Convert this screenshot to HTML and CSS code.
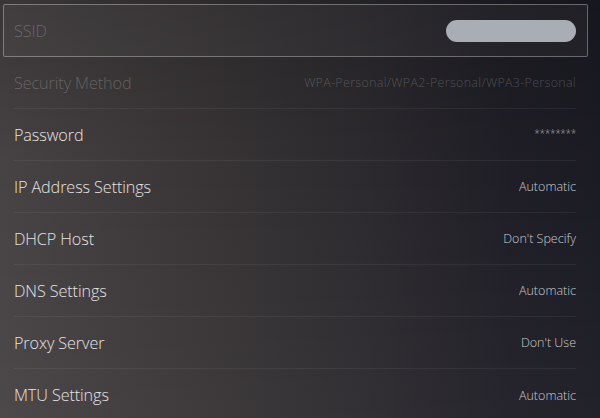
FILE: index.html
```html
<!DOCTYPE html>
<html lang="en">
<head>
<meta charset="utf-8">
<title>Wi-Fi Advanced Settings</title>
<link rel="stylesheet" href="styles.css">
</head>
<body>
<main class="screen">
  <ul class="settings">
    <li class="row row-focus disabled">
      <span class="label">SSID</span>
      <span class="pill"></span>
    </li>
    <li class="row disabled">
      <span class="label">Security Method</span>
      <span class="value wide">WPA-Personal/WPA2-Personal/WPA3-Personal</span>
    </li>
    <li class="row">
      <span class="label">Password</span>
      <span class="value secret">********</span>
    </li>
    <li class="row">
      <span class="label">IP Address Settings</span>
      <span class="value">Automatic</span>
    </li>
    <li class="row">
      <span class="label">DHCP Host</span>
      <span class="value">Don't Specify</span>
    </li>
    <li class="row">
      <span class="label">DNS Settings</span>
      <span class="value">Automatic</span>
    </li>
    <li class="row">
      <span class="label">Proxy Server</span>
      <span class="value">Don't Use</span>
    </li>
    <li class="row">
      <span class="label">MTU Settings</span>
      <span class="value">Automatic</span>
    </li>
  </ul>
</main>
</body>
</html>
```

FILE: styles.css
```css
* {
  box-sizing: border-box;
}

html,
body {
  margin: 0;
  height: 100%;
}

body {
  font-family: "Open Sans", "Noto Sans", sans-serif;
  font-weight: 300;
  color: #e4e4e6;
  overflow: hidden;
  background:
    linear-gradient(180deg, rgba(0, 0, 0, 0.18) 0%, rgba(0, 0, 0, 0) 40%, rgba(255, 255, 255, 0.03) 100%),
    linear-gradient(90deg, #474243 0%, #3a3637 30%, #2c2a2e 60%, #1f1e26 85%, #1b1b24 100%);
}

.screen {
  height: 100%;
  padding: 4px 24px 0 14px;
}

.settings {
  list-style: none;
  margin: 0;
  padding: 0;
}

.row {
  display: flex;
  align-items: center;
  justify-content: space-between;
  height: 52px;
  border-bottom: 1px solid rgba(255, 255, 255, 0.06);
}

.row:last-child {
  border-bottom: none;
}

/* focused entry: framed box reaching past the list edges */
.row-focus {
  height: 53px;
  margin: 0 -12px 0 -11px;
  padding: 0 11px 0 10px;
  border: 1px solid rgba(255, 255, 255, 0.32);
  border-radius: 2px;
  background: rgba(255, 255, 255, 0.04);
}

.label {
  font-size: 16.2px;
  letter-spacing: -0.1px;
}

.value {
  font-size: 12.5px;
  color: #cacacd;
}

.wide {
  letter-spacing: 0.3px;
}

.disabled .label,
.disabled .value {
  color: rgba(255, 255, 255, 0.22);
}

.secret {
  font-size: 10px;
  letter-spacing: -0.3px;
  position: relative;
  top: -2px;
  color: #a9a9ad;
}

.pill {
  width: 130px;
  height: 22px;
  border-radius: 11px;
  background: #a9adb4;
}
```
